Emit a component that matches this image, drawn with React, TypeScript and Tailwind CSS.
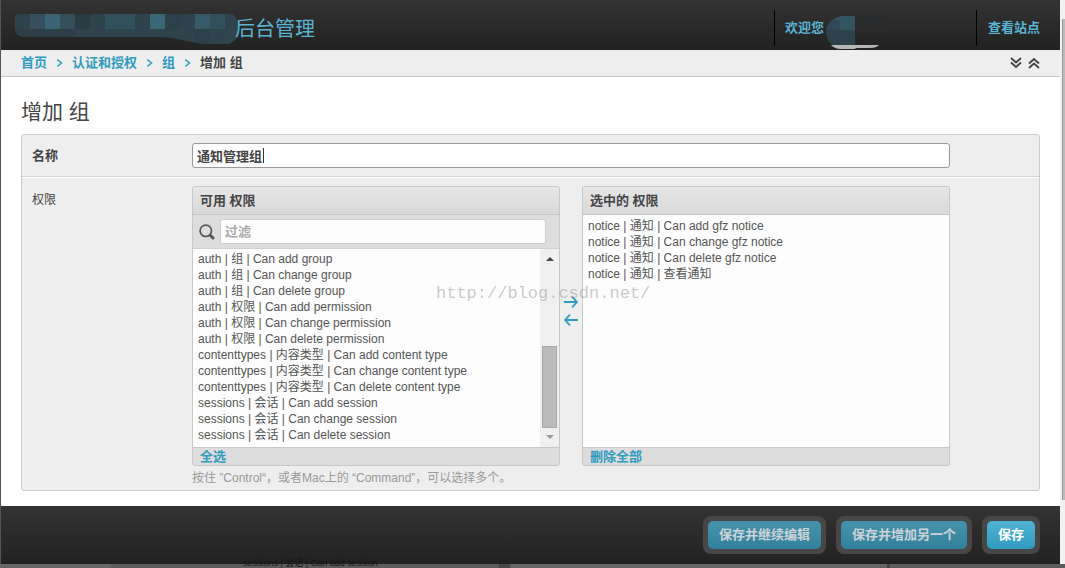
const availablePermissions = [
  'auth | 组 | Can add group',
  'auth | 组 | Can change group',
  'auth | 组 | Can delete group',
  'auth | 权限 | Can add permission',
  'auth | 权限 | Can change permission',
  'auth | 权限 | Can delete permission',
  'contenttypes | 内容类型 | Can add content type',
  'contenttypes | 内容类型 | Can change content type',
  'contenttypes | 内容类型 | Can delete content type',
  'sessions | 会话 | Can add session',
  'sessions | 会话 | Can change session',
  'sessions | 会话 | Can delete session',
]

const chosenPermissions = [
  'notice | 通知 | Can add gfz notice',
  'notice | 通知 | Can change gfz notice',
  'notice | 通知 | Can delete gfz notice',
  'notice | 通知 | 查看通知',
]

function Chevron() {
  return (
    <svg className="h-2 w-[7px] text-[#309bbf]" viewBox="0 0 7 8" fill="none" stroke="currentColor" strokeWidth="1.4" aria-hidden="true">
      <path d="M1.3 0.6L5.6 4L1.3 7.4" />
    </svg>
  )
}

function SiteName() {
  return (
    <div className="flex items-center">
      {/* Masked part of the site name */}
      <svg className="h-8 w-[224px]" viewBox="0 0 224 32" aria-hidden="true">
        <defs>
          <clipPath id="siteMask">
            <path d="M4 2H216C221 3 224 9 223 17C223 26 219 31 212 32H194C174 31 160 24 138 25H8C3 24 0 21 0 15V5C0 3 2 2 4 2Z" />
          </clipPath>
        </defs>
        <g clipPath="url(#siteMask)">
          <rect width="224" height="32" fill="#2f434c" />
          <rect x="15" width="15" height="17" fill="#35505c" />
          <rect x="30" width="15" height="17" fill="#3a6473" />
          <rect x="45" width="15" height="17" fill="#344e5a" />
          <rect x="60" width="15" height="17" fill="#2b3b42" />
          <rect x="90" width="30" height="17" fill="#31505b" />
          <rect x="135" width="15" height="17" fill="#3b6676" />
          <rect x="150" width="15" height="17" fill="#2c4049" />
          <rect x="180" width="15" height="17" fill="#38596a" />
          <rect x="195" width="15" height="17" fill="#334f5b" />
          <rect y="17" width="60" height="15" fill="#2d3e46" />
          <rect x="180" y="17" width="15" height="15" fill="#2b4049" />
          <rect x="210" y="17" width="15" height="15" fill="#30464f" />
        </g>
      </svg>
      <span className="-ml-1 pt-0.5 text-[20px] leading-7 text-[#59b4d4]">后台管理</span>
    </div>
  )
}

function Header() {
  return (
    <header className="flex h-[50px] bg-gradient-to-b from-[#333] to-[#222] pl-[14px]">
      <div className="flex flex-1 items-center pt-1.5">
        <SiteName />
      </div>
      <div className="flex w-[202px] items-stretch pt-2.5">
        <div className="mb-1 border-l border-black" />
        <div className="flex items-start pl-2.5">
          <span className="pt-2.5 text-[13px] leading-4 font-bold text-[#59b4d4]">欢迎您</span>
          {/* Masked user name */}
          <svg className="mt-1 ml-0.5 h-9 w-[62px]" viewBox="0 0 62 36" aria-hidden="true">
            <path d="M29 2H18C6 3 0 10 0 16C0 24 3 30 8 31H29Z" fill="#2d424b" />
            <path d="M29 2H18C13 2 10 4 7 6H14V16H29Z" fill="#335461" />
            <path d="M1 16L14 16V6H7C3 9 1 12 1 16Z" fill="#2f4a55" />
            <rect x="29" y="2" width="32" height="14" fill="#292a2b" />
            <path d="M5 31H53C51 33 48 34 44 34H31L28 35H15C10 35 7 33 5 31Z" fill="#b4b8b8" />
          </svg>
        </div>
      </div>
      <div className="flex pt-2.5">
        <div className="mb-1 border-l border-black" />
        <a href="#site" className="pt-2.5 pr-5 pl-[11px] text-[13px] leading-4 font-bold text-[#59b4d4]">查看站点</a>
      </div>
    </header>
  )
}

function Breadcrumbs() {
  return (
    <nav className="flex h-[27px] items-center justify-between border-b border-[#c4c4c4] bg-[#eee] px-5 text-[13px] leading-4 font-bold">
      <div className="flex items-center gap-[9px]">
        <a href="#home" className="text-[#309bbf]">首页</a>
        <Chevron />
        <a href="#auth" className="text-[#309bbf]">认证和授权</a>
        <Chevron />
        <a href="#group" className="text-[#309bbf]">组</a>
        <Chevron />
        <span className="text-[#444]">增加 组</span>
      </div>
      <div className="flex gap-1.5">
        <button type="button" aria-label="展开全部" className="text-[#444]">
          <svg className="h-3 w-3" viewBox="0 0 12 12" fill="none" stroke="currentColor" strokeWidth="1.8">
            <path d="M1 1L6 5.5L11 1M1 5.5L6 10L11 5.5" />
          </svg>
        </button>
        <button type="button" aria-label="收起全部" className="text-[#444]">
          <svg className="h-3 w-3" viewBox="0 0 12 12" fill="none" stroke="currentColor" strokeWidth="1.8">
            <path d="M1 6.5L6 2L11 6.5M1 11L6 6.5L11 11" />
          </svg>
        </button>
      </div>
    </nav>
  )
}

function PermissionList({ id, label, items }: { id: string; label: string; items: string[] }) {
  return (
    <select
      id={id}
      multiple
      aria-label={label}
      className="min-w-0 flex-1 appearance-none overflow-hidden border-0 bg-[#fdfdfd] pl-[5px] text-[12px] leading-4 text-[#555] outline-none"
    >
      {items.map((item) => (
        <option key={item} className="h-4 p-0 leading-4">{item}</option>
      ))}
    </select>
  )
}

function PermissionSelector() {
  return (
    <div className="relative flex">
      {/* Available */}
      <div className="flex h-[280px] min-w-0 flex-1 flex-col overflow-hidden rounded-[3px] border border-[#c8c8c8] bg-[#ddd]">
        <h2 className="h-7 border-b border-[#c8c8c8] bg-gradient-to-b from-[#e6e6e6] to-[#d9d9d9] px-[7px] text-[13px] leading-7 font-bold text-[#444]">可用 权限</h2>
        <div className="flex h-[34px] items-center gap-[5px] border-b border-[#d0d0d0] pr-[13px] pl-1.5">
          <svg className="h-4 w-4 text-[#555]" viewBox="0 0 16 16" fill="none" stroke="currentColor" aria-hidden="true">
            <circle cx="6.8" cy="6.8" r="5.7" strokeWidth="1.7" />
            <path d="M11.5 11.5L14 14" strokeWidth="3" strokeLinecap="round" />
          </svg>
          <input
            type="text"
            placeholder="过滤"
            aria-label="过滤"
            className="h-[25px] min-w-0 flex-1 rounded-[3px] border border-[#ccc] bg-[#fdfdfd] px-1 text-[13px] font-bold outline-none placeholder:text-[#aaa]"
          />
        </div>
        <div className="flex min-h-0 flex-1">
          <PermissionList id="available" label="可用 权限" items={availablePermissions} />
          <div className="flex w-[19px] flex-col items-center bg-[#f0f0f0]" aria-hidden="true">
            <svg className="mt-2 h-1 w-2 text-[#444]" viewBox="0 0 8 4" fill="currentColor">
              <path d="M0 4L4 0L8 4Z" />
            </svg>
            <div className="flex-1" />
            <div className="h-[82px] w-[15px] border border-[#a8a8a8] bg-[#bbb]" />
            <svg className="mt-[7px] mb-2 h-1 w-2 text-[#999]" viewBox="0 0 8 4" fill="currentColor">
              <path d="M0 0L4 4L8 0Z" />
            </svg>
          </div>
        </div>
        <a href="#add-all" className="h-[18px] border-t border-[#c8c8c8] px-[7px] text-[13px] leading-[18px] font-bold text-[#309bbf]">全选</a>
      </div>

      {/* Move buttons */}
      <div className="flex w-[22px] flex-col items-center gap-1.5 pt-[110px] text-[#309bbf]">
        <button type="button" aria-label="选择">
          <svg className="h-3 w-3.5" viewBox="0 0 14 12" fill="none" stroke="currentColor" strokeWidth="1.8">
            <path d="M0 6H13M8 0.7L13 6L8 11.3" />
          </svg>
        </button>
        <button type="button" aria-label="删除">
          <svg className="h-3 w-3.5" viewBox="0 0 14 12" fill="none" stroke="currentColor" strokeWidth="1.8">
            <path d="M14 6H1M6 0.7L1 6L6 11.3" />
          </svg>
        </button>
      </div>

      {/* Chosen */}
      <div className="flex h-[280px] min-w-0 flex-1 flex-col overflow-hidden rounded-[3px] border border-[#c8c8c8] bg-[#ddd]">
        <h2 className="h-7 border-b border-[#c8c8c8] bg-gradient-to-b from-[#e6e6e6] to-[#d9d9d9] px-[7px] text-[13px] leading-7 font-bold text-[#444]">选中的 权限</h2>
        <div className="flex min-h-0 flex-1 bg-[#fdfdfd] pt-px">
          <PermissionList id="chosen" label="选中的 权限" items={chosenPermissions} />
        </div>
        <a href="#remove-all" className="h-[18px] border-t border-[#c8c8c8] px-[7px] text-[13px] leading-[18px] font-bold text-[#309bbf]">删除全部</a>
      </div>

      {/* Watermark */}
      <span className="pointer-events-none absolute top-24 left-[244px] font-['Liberation_Mono',monospace] text-[17px] leading-6 text-[#888]/45">
        http://blog.csdn.net/
      </span>
    </div>
  )
}

function SubmitButton({ children, primary = false }: { children: string; primary?: boolean }) {
  return (
    <div className="rounded-lg bg-[#474747] p-[5px]">
      <button
        type="submit"
        className={
          primary
            ? 'block h-7 rounded-[5px] bg-gradient-to-b from-[#4fb2d3] to-[#309bbf] px-[11px] text-[13px] leading-7 font-bold text-white'
            : 'block h-7 rounded-[5px] bg-gradient-to-b from-[#4793ac] to-[#31819c] px-[11px] text-[13px] leading-7 font-bold text-[#ccd3d6]'
        }
      >
        {children}
      </button>
    </div>
  )
}

export default function App() {
  return (
    <div className="relative flex min-h-screen flex-col font-['Liberation_Sans','Noto_Sans_CJK_SC',sans-serif] text-[12px]">
      <div className="flex flex-1">
        <form className="flex min-w-0 flex-1 flex-col border-l border-[#555] bg-white" onSubmit={(e) => e.preventDefault()}>
          <Header />
          <Breadcrumbs />

          <main className="flex-1 px-5 pt-[21px] pb-[15px]">
            <h1 className="mb-2 text-[21px] leading-7 text-[#444]">增加 组</h1>

            <div className="rounded-[3px] border border-[#ccc] bg-[#eee]">
              <div className="flex border-b border-[#d2d2d2] pt-2 pr-[89px] pb-2">
                <label htmlFor="name" className="w-[170px] pl-2.5 text-[13px] leading-[25px] font-bold text-[#444]">名称</label>
                <div className="relative flex-1">
                  <input
                    id="name"
                    type="text"
                    defaultValue="通知管理组"
                    className="block h-[25px] w-full rounded-[3px] border border-[#999] bg-white px-1 text-[13px] font-bold text-[#444] outline-none"
                  />
                  <span className="absolute top-[5px] left-[71px] h-[15px] w-px bg-[#333]" />
                </div>
              </div>

              <div className="flex border-t border-white pt-2 pr-[89px] pb-1">
                <label htmlFor="available" className="w-[170px] pl-2.5 text-[12px] leading-7 text-[#444]">权限</label>
                <div className="min-w-0 flex-1">
                  <PermissionSelector />
                  <p className="pt-1 text-[12px] leading-4 text-[#999]">按住 ”Control“，或者Mac上的 “Command”，可以选择多个。</p>
                </div>
              </div>
            </div>
          </main>

          <footer className="flex justify-end gap-2.5 bg-gradient-to-b from-[#333] to-[#222] px-5 py-2.5">
            <SubmitButton>保存并继续编辑</SubmitButton>
            <SubmitButton>保存并增加另一个</SubmitButton>
            <SubmitButton primary>保存</SubmitButton>
          </footer>
        </form>

        {/* Page scrollbar */}
        <div className="flex w-[5px] flex-col bg-[#f1f1f1] pt-[19px] pb-16 pl-0.5" aria-hidden="true">
          <div className="flex-1 border-l border-[#999] bg-[#bbb]" />
        </div>
      </div>

      {/* Page behind the form, dimmed */}
      <div className="flex h-1" aria-hidden="true">
        <div className="w-[111px] bg-[#666]" />
        <div className="w-[388px] bg-[#5c5c5c]" />
        <div className="w-[11px] bg-[#484848]" />
        <div className="w-[377px] bg-[#646464]" />
        <div className="w-[3px] bg-[#444]" />
        <div className="flex-1 bg-[#5c5c5c]" />
      </div>
      <span className="absolute bottom-0 left-[243px] text-[9px] leading-[9px] text-[#151515]" aria-hidden="true">
        sessions | 会话 | Can add session
      </span>
    </div>
  )
}
